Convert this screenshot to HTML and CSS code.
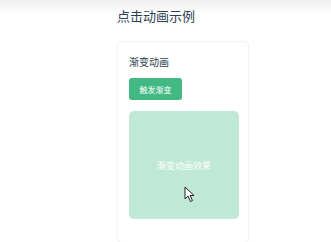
FILE: index.html
```html
<!DOCTYPE html>
<html lang="zh">
<head>
<meta charset="utf-8">
<link rel="stylesheet" href="styles.css">
</head>
<body>
<div class="page">
  <h1 class="title">点击动画示例</h1>
  <div class="card">
    <h2 class="subtitle">渐变动画</h2>
    <button class="btn">触发渐变</button>
    <div class="box">
      <span>渐变动画效果</span>
      <svg class="cursor" width="12" height="17" viewBox="0 0 12 17"><path d="M1 1 L1 13 L4 10 L6.5 15.5 L8.5 14.5 L6 9.5 L10 9.5 Z" fill="#fff" stroke="#222" stroke-width="1" stroke-linejoin="round"/></svg>
    </div>
  </div>
</div>
</body>
</html>
```
FILE: styles.css
```css
html, body {
  margin: 0;
  padding: 0;
}
body {
  background: linear-gradient(to bottom, #efefef 0px, #fafafa 10px, #ffffff 16px);
  font-family: "Noto Sans CJK SC", "Noto Sans", sans-serif;
  height: 242px;
  overflow: hidden;
}
.page {
  padding: 8px 0 0 117px;
}
.title {
  margin: 0;
  font-size: 13px;
  line-height: 16px;
  font-weight: 400;
  color: #2c3e50;
}
.card {
  margin-top: 17px;
  width: 132px;
  box-sizing: border-box;
  padding: 13px 11px 23px;
  background: #fff;
  border-radius: 5px;
  box-shadow: 0 0 2px rgba(0,0,0,0.06);
  border: 1px solid #f4f4f4;
}
.subtitle {
  margin: 0;
  font-size: 10px;
  line-height: 14px;
  font-weight: 400;
  color: #2c3e50;
}
.btn {
  display: block;
  margin-top: 9px;
  width: 53px;
  height: 22px;
  padding: 0;
  border: none;
  border-radius: 3px;
  background: #42b983;
  color: #fff;
  font-family: inherit;
  font-size: 8px;
}
.box {
  position: relative;
  margin-top: 11px;
  width: 110px;
  height: 108px;
  border-radius: 5px;
  background: #c0e8d6;
  display: flex;
  align-items: center;
  justify-content: center;
  color: #fff;
  font-size: 9px;
}
.cursor {
  position: absolute;
  left: 55px;
  top: 75px;
}
```
